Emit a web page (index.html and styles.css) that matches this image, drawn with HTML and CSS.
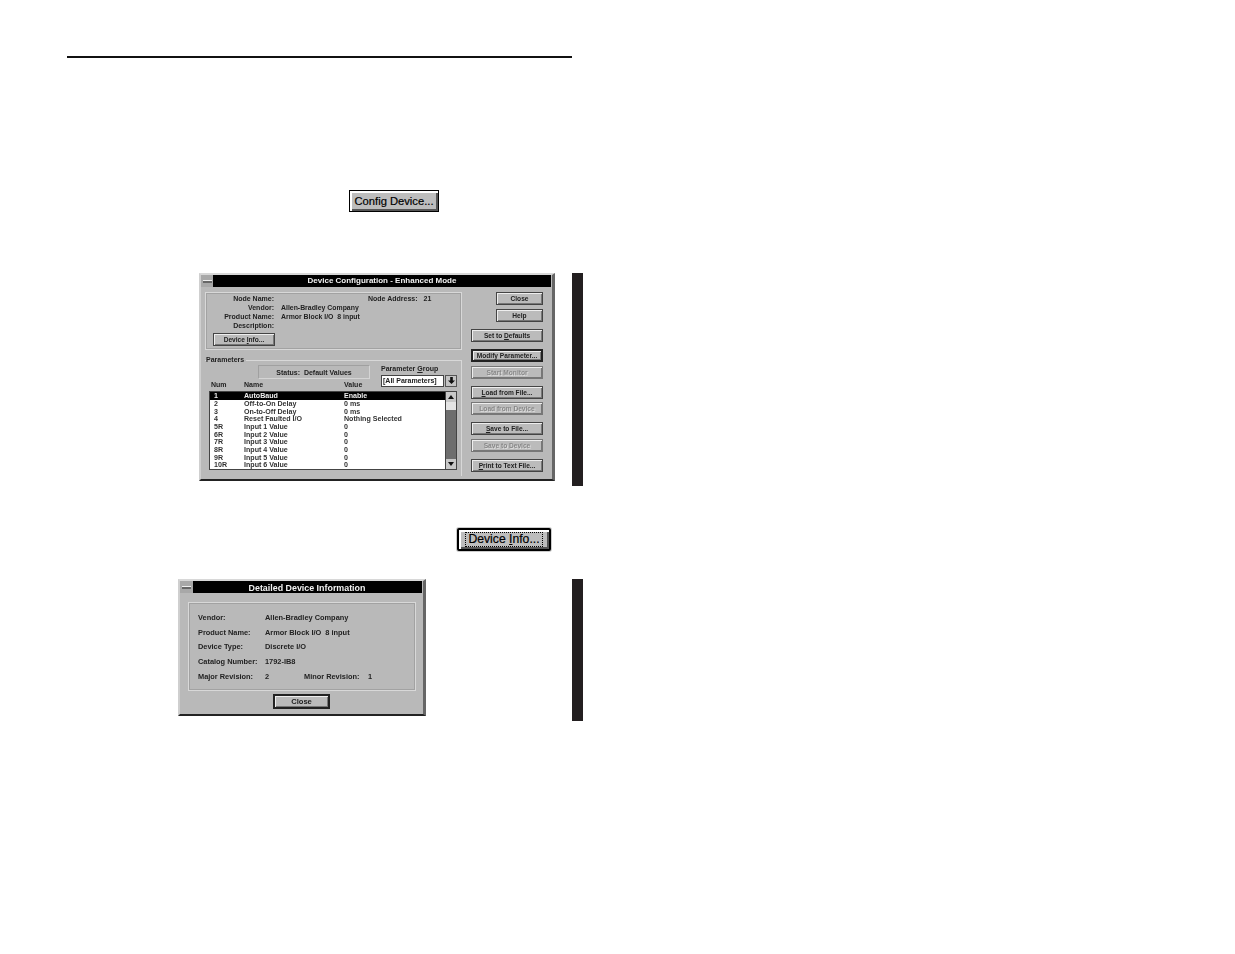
FILE: index.html
```html
<!DOCTYPE html>
<html lang="en">
<head>
<meta charset="utf-8">
<title>Device Configuration</title>
<link rel="stylesheet" href="styles.css">
</head>
<body>
<main class="page">
  <hr class="rule">

  <div class="shot-row config-row">
    <button class="shot-btn config-btn" type="button">Config Device...</button>
  </div>

  <section class="figure fig-config">
    <div class="win win-config">
      <div class="titlebar"><span class="sysbox"><i></i></span><span class="title">Device Configuration - Enhanced Mode</span></div>
      <div class="config-body">
        <div class="config-left">
          <div class="group info-group">
            <div class="info-grid">
              <div class="info-labels">
                <span class="b">Node Name:</span>
                <span class="b">Vendor:</span>
                <span class="b">Product Name:</span>
                <span class="b">Description:</span>
              </div>
              <div class="info-values">
                <span>&nbsp;</span>
                <span>Allen-Bradley Company</span>
                <span>Armor Block I/O&nbsp; 8 input</span>
              </div>
              <div class="node-addr"><span class="b">Node Address:</span><span class="b">21</span></div>
            </div>
            <span class="wbtn info-btn"><span>Device <u>I</u>nfo...</span></span>
          </div>
          <div class="group param-group">
            <span class="legend">Parameters</span>
            <div class="param-top">
              <div class="status">Status:&nbsp; Default Values</div>
              <div class="pgroup">
                <span class="b pgroup-label">Parameter <u>G</u>roup</span>
                <div class="combo"><span class="combo-field">[All Parameters]</span><span class="combo-arrow"><svg viewBox="0 0 8 9" width="7" height="8"><path d="M2.5 0h3v4H8L4 8 0 4h2.5z" fill="#111"/></svg></span></div>
              </div>
            </div>
            <div class="list-head"><span class="c-num">Num</span><span class="c-name">Name</span><span class="c-val">Value</span></div>
            <div class="listbox">
              <div class="rows">
                <div class="row selected"><span class="c-num">1</span><span class="c-name">AutoBaud</span><span class="c-val">Enable</span></div>
                <div class="row"><span class="c-num">2</span><span class="c-name">Off-to-On Delay</span><span class="c-val">0 ms</span></div>
                <div class="row"><span class="c-num">3</span><span class="c-name">On-to-Off Delay</span><span class="c-val">0 ms</span></div>
                <div class="row"><span class="c-num">4</span><span class="c-name">Reset Faulted I/O</span><span class="c-val">Nothing Selected</span></div>
                <div class="row"><span class="c-num">5R</span><span class="c-name">Input 1 Value</span><span class="c-val">0</span></div>
                <div class="row"><span class="c-num">6R</span><span class="c-name">Input 2 Value</span><span class="c-val">0</span></div>
                <div class="row"><span class="c-num">7R</span><span class="c-name">Input 3 Value</span><span class="c-val">0</span></div>
                <div class="row"><span class="c-num">8R</span><span class="c-name">Input 4 Value</span><span class="c-val">0</span></div>
                <div class="row"><span class="c-num">9R</span><span class="c-name">Input 5 Value</span><span class="c-val">0</span></div>
                <div class="row"><span class="c-num">10R</span><span class="c-name">Input 6 Value</span><span class="c-val">0</span></div>
              </div>
              <div class="scrollbar">
                <span class="sb-btn"><svg viewBox="0 0 6 4" width="6" height="4"><path d="M3 0l3 4H0z" fill="#111"/></svg></span>
                <span class="sb-thumb"></span>
                <span class="sb-track"></span>
                <span class="sb-btn"><svg viewBox="0 0 6 4" width="6" height="4"><path d="M3 4L0 0h6z" fill="#111"/></svg></span>
              </div>
            </div>
          </div>
        </div>
        <div class="config-right">
          <span class="wbtn short">Close</span>
          <span class="wbtn short">Help</span>
          <span class="wbtn gap-a"><span>Set to <u>D</u>efaults</span></span>
          <span class="wbtn default gap-a">Modify Parameter...</span>
          <span class="wbtn off">Start Monitor</span>
          <span class="wbtn gap-c"><span><u>L</u>oad from File...</span></span>
          <span class="wbtn off tight">Load from Device</span>
          <span class="wbtn gap-c"><span><u>S</u>ave to File...</span></span>
          <span class="wbtn off">Save to Device</span>
          <span class="wbtn gap-c"><span><u>P</u>rint to Text File...</span></span>
        </div>
      </div>
    </div>
    <div class="sidebar"></div>
  </section>

  <div class="shot-row info-row">
    <button class="shot-btn device-btn" type="button"><span class="focus">Device <u>I</u>nfo...</span></button>
  </div>

  <section class="figure fig-info">
    <div class="win win-info">
      <div class="titlebar"><span class="sysbox"><i></i></span><span class="title">Detailed Device Information</span></div>
      <div class="group detail-group">
        <div class="detail-row"><span class="b d-label">Vendor:</span><span>Allen-Bradley Company</span></div>
        <div class="detail-row"><span class="b d-label">Product Name:</span><span>Armor Block I/O&nbsp; 8 input</span></div>
        <div class="detail-row"><span class="b d-label">Device Type:</span><span>Discrete I/O</span></div>
        <div class="detail-row"><span class="b d-label">Catalog Number:</span><span>1792-IB8</span></div>
        <div class="detail-row"><span class="b d-label">Major Revision:</span><span class="d-major">2</span><span class="b d-minor">Minor Revision:</span><span>1</span></div>
      </div>
      <div class="detail-foot"><span class="wbtn default close-btn">Close</span></div>
    </div>
    <div class="sidebar"></div>
  </section>
</main>
</body>
</html>
```
FILE: styles.css
```css
* { box-sizing: border-box; }
html, body { margin: 0; background: #fff; }
body { font-family: "Liberation Sans", Arial, sans-serif; color: #111; }

.page { width: 1235px; height: 954px; padding: 56px 0 0 67px; overflow: hidden; }
.rule { width: 505px; height: 2px; margin: 0; border: 0; background: #111; }

.shot-row { display: flex; justify-content: flex-start; }
.config-row { margin: 132px 0 0 282px; }
.info-row { margin: 42px 0 0 390px; }

.shot-btn {
  display: flex; align-items: center; justify-content: center;
  padding: 0; color: #000; background: #bdbdbd;
  font-family: "Liberation Sans", Arial, sans-serif; font-weight: 400;
  -webkit-text-stroke: .2px #000;
}
.config-btn {
  width: 90px; height: 22px; font-size: 11.2px;
  border: 1px solid #000;
  box-shadow: inset 1px 1px 0 1px #fff, inset -2px -2px 0 #555;
}
.device-btn {
  width: 94px; height: 23px; font-size: 12.2px;
  border: 2px solid #000; border-radius: 2px;
  box-shadow: 0 0 0 1px #ccc, inset 1px 1px 0 1px #fff, inset -2px -2px 0 #555;
}
.focus { padding: 0 2px; border: 1px dotted #000; line-height: 13px; }

.figure { display: flex; align-items: flex-start; width: 516px; }
.fig-config { margin-top: 61px; padding-left: 132px; }
.fig-info { margin-top: 28px; padding-left: 111px; }
.sidebar { width: 11px; margin-left: auto; background: #231f20; }
.fig-config .sidebar { height: 213px; }
.fig-info .sidebar { height: 142px; }

.win {
  background: #b9b9b9; font-size: 7px; line-height: 8px; color: #222;
  border-top: 2px solid #d8d8d8; border-left: 2px solid #cfcfcf;
  border-right: 3px solid #666; border-bottom: 2px solid #222;
  filter: blur(.7px);
}
.win-config { width: 356px; height: 208px; }
.win-info { width: 248px; height: 137px; font-size: 7.4px; }

.titlebar { display: flex; height: 12px; }
.sysbox { display: flex; align-items: center; justify-content: center; width: 12px; background: #a8a8a8; }
.win-info .sysbox { width: 13px; }
.sysbox i { width: 9px; height: 3px; background: #666; border-top: 1px solid #eee; }
.title { flex: 1; margin-right: 1px; background: #000; color: #f2f2f2; font-weight: 700; font-size: 8px; line-height: 12px; text-align: center; }
.win-info .title { font-size: 8.9px; line-height: 14px; padding-right: 1px; }

.b { font-weight: 700; }

.group { border: 1px solid #d8d8d8; outline: 1px solid #a2a2a2; outline-offset: -2px; }

.config-body { display: flex; align-items: flex-start; padding: 5px 0 0 4px; }
.config-left { width: 257px; font-weight: 700; }
.config-right { display: flex; flex-direction: column; align-items: flex-end; width: 80px; margin-left: 1px; gap: 4px; }

.wbtn {
  display: flex; align-items: center; justify-content: center;
  width: 72px; height: 13px; font-size: 6.6px; line-height: 8px; font-weight: 700; white-space: nowrap;
  color: #222; background: #bbb;
  border: 1px solid #444;
  box-shadow: inset 1px 1px 0 #eee, inset -1px -1px 0 #777;
}
.wbtn.short { width: 47px; }
.wbtn.default { border: 2px solid #222; }
.wbtn.off { color: #888; border-color: #777; text-shadow: 1px 1px 0 #ddd; }
.gap-a { margin-top: 3px; }
.gap-c { margin-top: 3px; }
.tight { margin-top: -1px; }

.info-group { height: 58px; padding: 1px 0 0 0; }
.info-grid { display: flex; }
.info-labels, .info-values { display: flex; flex-direction: column; }
.info-labels { width: 68px; align-items: flex-end; }
.info-labels span, .info-values span { height: 9px; line-height: 9px; }
.info-values { width: 87px; margin-left: 7px; font-size: 6.9px; }
.node-addr { display: flex; gap: 6px; line-height: 9px; }
.info-btn { width: 62px; height: 13px; margin: 3px 0 0 7px; }

.param-group { margin-top: 10px; height: 116px; border-width: 1px 1px 0 0; outline: 0; border-top-color: #d8d8d8; position: relative; }
.legend { position: absolute; left: 1px; top: -5px; padding-right: 2px; background: #b9b9b9; }

.param-top { display: flex; align-items: flex-start; height: 17px; padding: 4px 0 0 53px; }
.status { flex: none; width: 112px; height: 14px; line-height: 13px; text-align: center; border: 1px solid #d4d4d4; border-top-color: #a0a0a0; border-left-color: #a0a0a0; }
.pgroup { display: flex; flex-direction: column; flex: none; margin-left: 11px; margin-top: -1px; }
.pgroup-label { flex: none; height: 11px; line-height: 9px; white-space: nowrap; }
.combo { display: flex; flex: none; width: 76px; height: 12px; }
.combo-field { width: 63px; background: #fff; border: 1px solid #444; line-height: 10px; padding-left: 1px; color: #222; white-space: nowrap; overflow: hidden; }
.combo-arrow { display: flex; align-items: center; justify-content: center; width: 12px; margin-left: 1px; background: #c4c4c4; border: 1px solid #555; }

.list-head { display: flex; height: 10px; margin-top: 3px; padding-left: 6px; line-height: 7px; }
.c-num { width: 33px; flex: none; }
.c-name { width: 100px; flex: none; }

.listbox { display: flex; width: 248px; height: 79px; margin-left: 4px; background: #fff; border: 1px solid #444; font-size: 7.1px; }
.rows { flex: 1; overflow: hidden; }
.row { display: flex; height: 7.67px; line-height: 8px; color: #333; }
.row .c-num { padding-left: 4px; width: 34px; }
.row .c-name { width: 100px; }
.row.selected { background: #000; color: #eee; height: 8px; }
.scrollbar { display: flex; flex-direction: column; width: 11px; background: #6e6e6e; border-left: 1px solid #444; }
.sb-btn { display: flex; align-items: center; justify-content: center; height: 10px; background: #c8c8c8; }
.sb-thumb { height: 8px; background: #e4e4e4; }
.sb-track { flex: 1; }

.detail-group { width: 228px; height: 89px; margin: 9px 0 0 8px; padding: 10px 0 0 9px; font-weight: 700; }
.detail-row { display: flex; height: 14.7px; line-height: 10px; }
.d-label { width: 67px; flex: none; }
.d-major { width: 39px; }
.d-minor { width: 64px; }
.detail-foot { display: flex; justify-content: center; padding: 3px 0 0 0; }
.close-btn { width: 57px; height: 15px; border-color: #000; font-size: 7.6px; }
```
